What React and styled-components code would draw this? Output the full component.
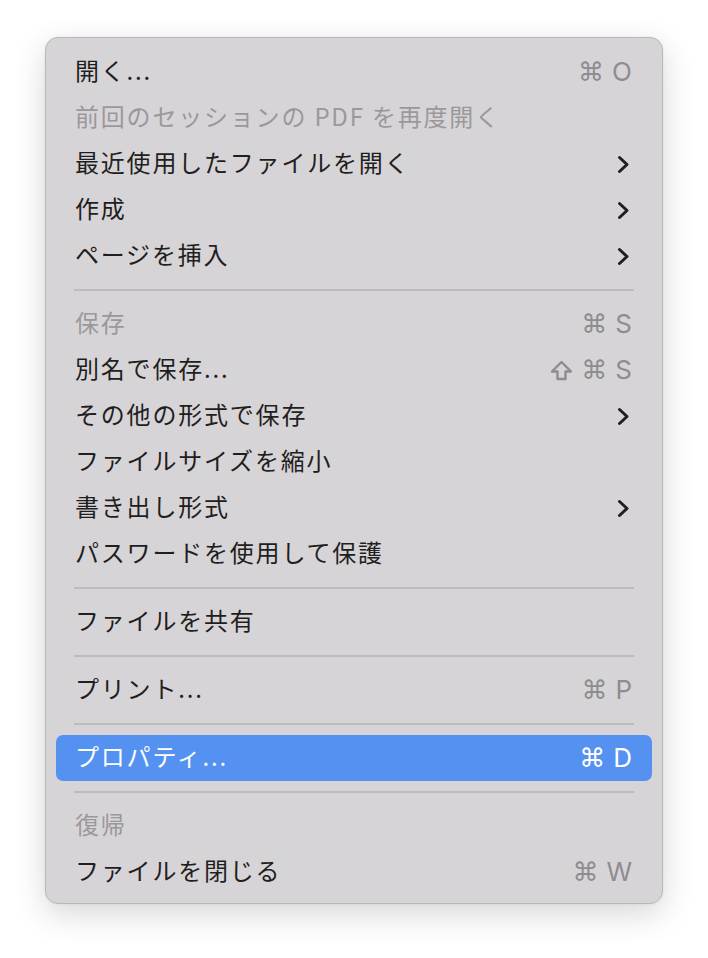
import React from 'react';
import styled, { createGlobalStyle } from 'styled-components';

const GlobalStyle = createGlobalStyle`
  html, body {
    margin: 0;
    padding: 0;
    background: #ffffff;
  }
  body {
    font-family: "Noto Sans CJK JP", "Noto Sans", sans-serif;
  }
`;

const menuGroups = [
  [
    { label: '開く...', keys: ['⌘', 'O'] },
    { label: '前回のセッションの PDF を再度開く', disabled: true },
    { label: '最近使用したファイルを開く', submenu: true },
    { label: '作成', submenu: true },
    { label: 'ページを挿入', submenu: true },
  ],
  [
    { label: '保存', keys: ['⌘', 'S'], disabled: true },
    { label: '別名で保存...', keys: ['⇧', '⌘', 'S'] },
    { label: 'その他の形式で保存', submenu: true },
    { label: 'ファイルサイズを縮小' },
    { label: '書き出し形式', submenu: true },
    { label: 'パスワードを使用して保護' },
  ],
  [{ label: 'ファイルを共有' }],
  [{ label: 'プリント...', keys: ['⌘', 'P'] }],
  [{ label: 'プロパティ...', keys: ['⌘', 'D'], active: true }],
  [
    { label: '復帰', disabled: true },
    { label: 'ファイルを閉じる', keys: ['⌘', 'W'] },
  ],
];

function Chevron() {
  return (
    <svg width="13" height="19" viewBox="0 0 13 19">
      <path
        d="M2.5 2.5 L10 9.5 L2.5 16.5"
        fill="none"
        stroke="currentColor"
        strokeWidth="3"
        strokeLinecap="round"
        strokeLinejoin="round"
      />
    </svg>
  );
}

function ShiftIcon() {
  return (
    <svg width="23" height="21" viewBox="0 0 23 21">
      <path
        d="M11.5 2 L21 11.5 L15.5 11.5 L15.5 19 L7.5 19 L7.5 11.5 L2 11.5 Z"
        fill="none"
        stroke="currentColor"
        strokeWidth="2.4"
        strokeLinejoin="round"
      />
    </svg>
  );
}

function Shortcut({ keys, active }) {
  return (
    <Keys $active={active}>
      {keys.map((k, i) => {
        if (k === '⇧') return <ShiftIcon key={i} />;
        if (k === '⌘') return <Cmd key={i}>⌘</Cmd>;
        return <KeyLetter key={i}>{k}</KeyLetter>;
      })}
    </Keys>
  );
}

export default function App() {
  return (
    <>
      <GlobalStyle />
      <Page>
        <Menu>
          {menuGroups.map((group, gi) => (
            <React.Fragment key={gi}>
              {gi > 0 && <Separator />}
              {group.map(item => (
                <Item
                  key={item.label}
                  $disabled={item.disabled}
                  $active={item.active}
                >
                  <Label>{item.label}</Label>
                  {item.keys && <Shortcut keys={item.keys} active={item.active} />}
                  {item.submenu && (
                    <Arrow>
                      <Chevron />
                    </Arrow>
                  )}
                </Item>
              ))}
            </React.Fragment>
          ))}
        </Menu>
      </Page>
    </>
  );
}

const Page = styled.div`
  width: 708px;
  height: 958px;
  padding: 37px 0 0 45px;
  box-sizing: border-box;
`;

const Menu = styled.div`
  width: 618px;
  box-sizing: border-box;
  padding: 11px 10px 8px;
  background: #d7d4d8;
  border: 1px solid #b9b7ba;
  border-radius: 13px;
  box-shadow: 0 10px 32px rgba(0, 0, 0, 0.16), 0 0 3px rgba(0, 0, 0, 0.06);
`;

const Item = styled.div`
  display: flex;
  align-items: center;
  height: 46px;
  padding: 0 20px 0 19px;
  border-radius: 7px;
  background: ${props => (props.$active ? '#5591f1' : 'transparent')};
  color: ${props => {
    if (props.$active) return '#ffffff';
    if (props.$disabled) return '#9b989c';
    return '#1f1e20';
  }};
`;

const Label = styled.span`
  flex: 1;
  font-size: 24px;
  line-height: 1;
  padding-bottom: 4px;
  letter-spacing: 1.8px;
  white-space: nowrap;
`;

const Keys = styled.span`
  display: flex;
  align-items: center;
  gap: 8px;
  color: ${props => (props.$active ? '#ffffff' : '#8f8c90')};
`;

const Cmd = styled.span`
  font-family: "DejaVu Sans", sans-serif;
  font-size: 26px;
  line-height: 1;
`;

const KeyLetter = styled.span`
  font-family: Inter, "Noto Sans", sans-serif;
  font-size: 26px;
  line-height: 1;
`;

const Arrow = styled.span`
  display: flex;
  margin-right: 2px;
  color: #1f1e20;
`;

const Separator = styled.div`
  height: 2px;
  margin: 10px 18px;
  background: #bebbbf;
`;
